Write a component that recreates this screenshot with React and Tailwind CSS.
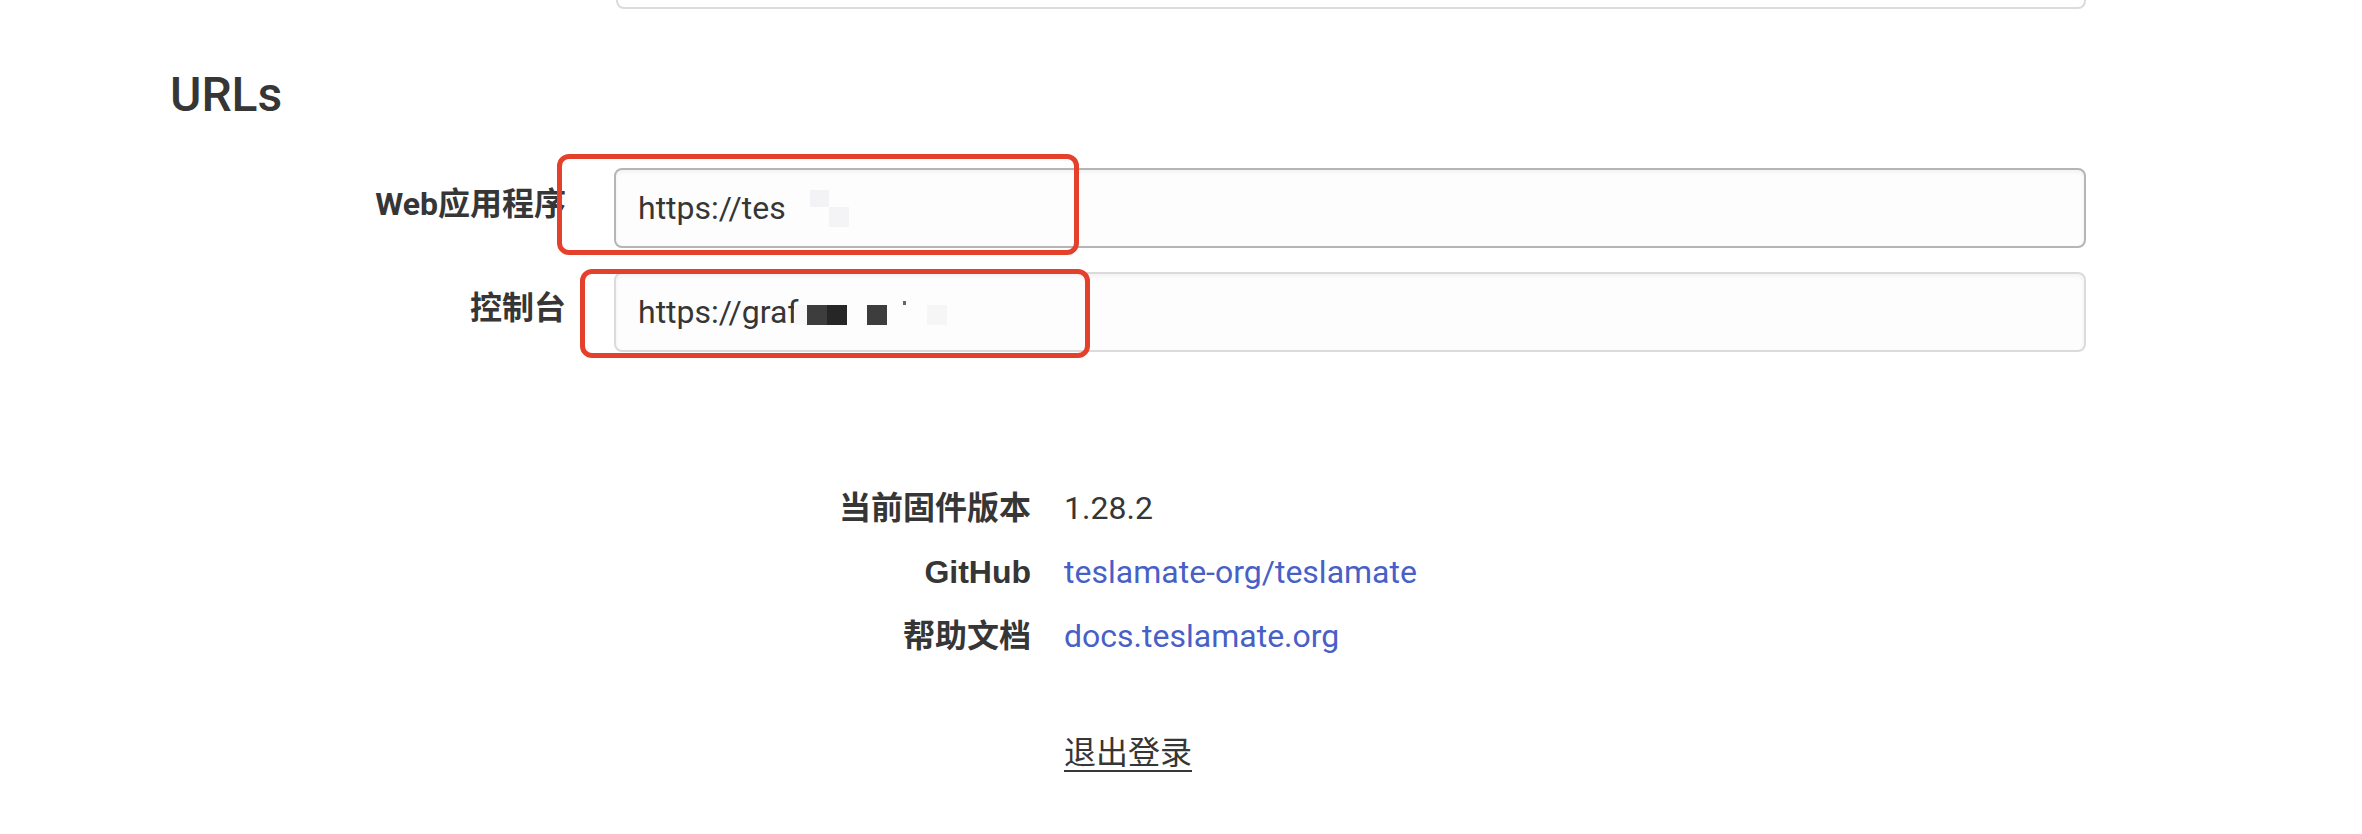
import React from 'react';

const FONT = "font-['Roboto','Noto_Sans_CJK_SC',sans-serif]";

// blurred/pixelated parts of the url values
const Mask = ({ left, top, w, h, color }) => (
    <span
        className="absolute"
        style={{ left, top, width: w, height: h, background: color }}
    />
);

const UrlField = ({ label, value, hovered, masks }) => (
    <div className="flex items-start">
        <div className="ml-[203px] w-[193px] mr-[48px] overflow-hidden whitespace-nowrap text-right pt-[12px] text-[32px] leading-[48px] font-bold text-[#363636]">
            {label}
        </div>
        <div
            className={
                'relative flex-1 h-[80px] flex items-center pl-[22px] rounded-[8px] border-2 bg-[#fdfdfd] shadow-[inset_0_2px_4px_rgba(10,10,10,0.05)] ' +
                (hovered ? 'border-[#b5b5b5]' : 'border-[#dbdbdb]')
            }
        >
            <span className="text-[32px] leading-[48px] text-[#363636]">{value}</span>
            {masks.map((m, i) => (
                <Mask key={i} {...m} />
            ))}
        </div>
    </div>
);

const InfoRow = ({ label, children }) => (
    <>
        <div className="h-[64px] flex items-center justify-end text-[32px] font-bold text-[#363636]">
            {label}
        </div>
        <div className="h-[64px] flex items-center text-[32px] text-[#363636]">{children}</div>
    </>
);

export default function App() {
    return (
        <div className={`relative w-[2362px] h-[834px] overflow-hidden bg-white ${FONT}`}>
            <div className="pl-[170px] pr-[276px]">
                {/* bottom of the previous input, scrolled off */}
                <div className="ml-[446px] h-[9px] border-x-2 border-b-2 border-[#dbdbdb] rounded-b-[8px]" />

                <h2 className="mt-[58px] text-[48px] leading-[56px] font-medium text-[#363636]">URLs</h2>

                <div className="mt-[45px] flex flex-col gap-[24px]">
                    <UrlField
                        label="Web应用程序"
                        value="https://tes"
                        hovered
                        masks={[
                            { left: 194, top: 20, w: 19, h: 17, color: '#f3f3f5' },
                            { left: 213, top: 37, w: 20, h: 20, color: '#f4f4f6' },
                        ]}
                    />
                    <UrlField
                        label="控制台"
                        value="https://graf"
                        masks={[
                            { left: 178, top: 31, w: 15, h: 20, color: '#f8f8f9' },
                            { left: 191, top: 31, w: 20, h: 20, color: '#3d3d3d' },
                            { left: 211, top: 31, w: 20, h: 20, color: '#262626' },
                            { left: 251, top: 31, w: 20, h: 20, color: '#3d3d3d' },
                            { left: 287, top: 27, w: 3, h: 4, color: '#666666' },
                            { left: 311, top: 31, w: 20, h: 20, color: '#f6f6f7' },
                        ]}
                    />
                </div>

                <div className="mt-[124px] grid grid-cols-[auto_auto] gap-x-[33px] w-fit mx-auto">
                    <InfoRow label="当前固件版本">1.28.2</InfoRow>
                    <InfoRow label={<span className="font-['Liberation_Sans',sans-serif]">GitHub</span>}>
                        <a className="text-[#485fc7]">teslamate-org/teslamate</a>
                    </InfoRow>
                    <InfoRow label="帮助文档">
                        <a className="text-[#485fc7]">docs.teslamate.org</a>
                    </InfoRow>
                </div>

                <div className="mt-[53px] text-center leading-[64px] text-[32px] text-[#363636]">
                    <a className="underline underline-offset-[6px] decoration-2">退出登录</a>
                </div>
            </div>

            {/* red annotation boxes */}
            <div className="absolute left-[557px] top-[154px] w-[522px] h-[101px] border-[5px] border-[#e4402b] rounded-[12px]" />
            <div className="absolute left-[580px] top-[269px] w-[510px] h-[89px] border-[5px] border-[#e4402b] rounded-[12px]" />
        </div>
    );
}
